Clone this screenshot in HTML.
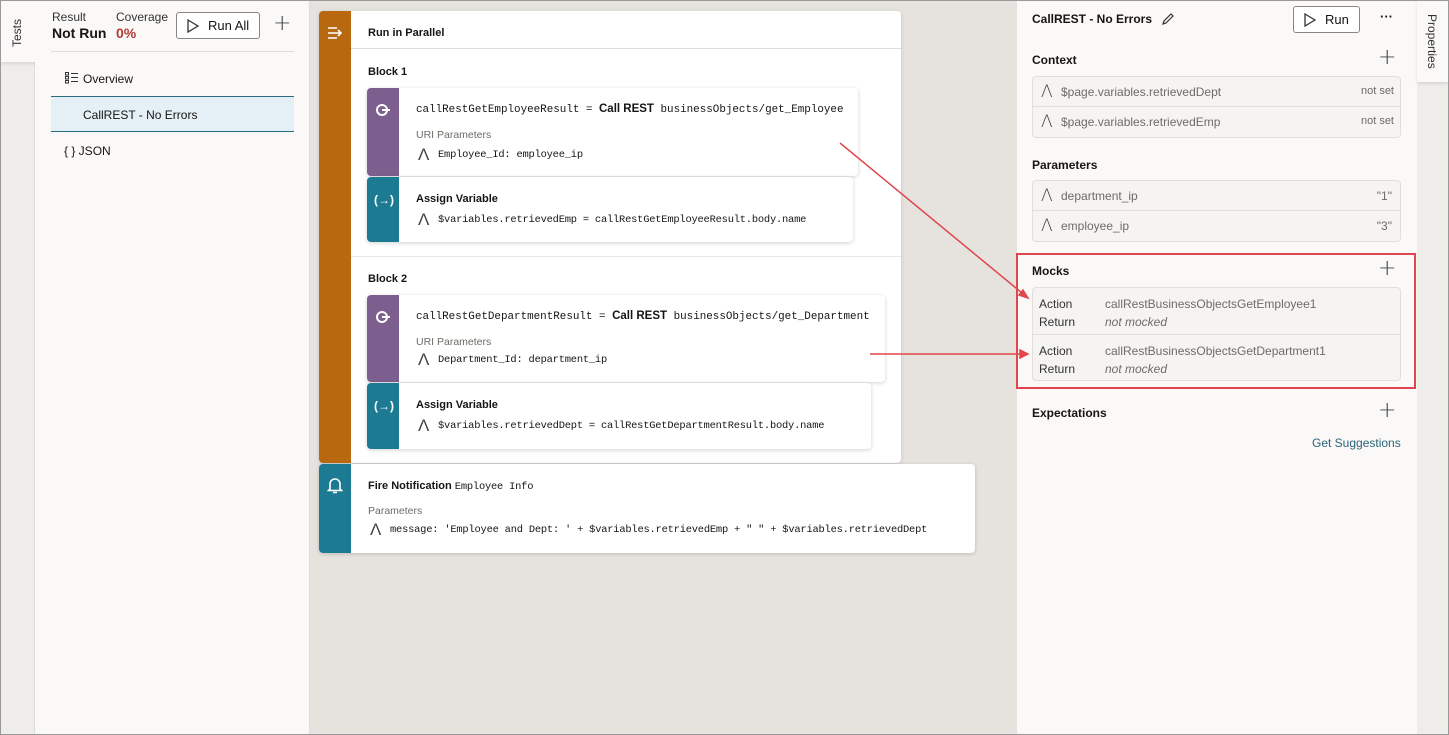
<!DOCTYPE html>
<html><head><meta charset="utf-8"><style>
*{box-sizing:border-box;margin:0;padding:0}
body{width:1449px;height:735px;overflow:hidden;font-family:"Liberation Sans",sans-serif;color:#161513;background:#e6e3df;position:relative;font-size:12px}
.a{position:absolute}
.mono{font-family:"Liberation Mono",monospace;font-size:10.4px;letter-spacing:-0.2px}
.mono2{font-family:"Liberation Mono",monospace;font-size:10.9px;letter-spacing:0}
.b{font-weight:bold}
.card{position:absolute;background:#fff;border-radius:4px;box-shadow:0 1px 4px rgba(0,0,0,.18)}
.strip{position:absolute;left:0;top:0;bottom:0;width:32px;border-radius:4px 0 0 4px}
.pur{background:#7c5f8e}
.teal{background:#1d7a93}
.sm{font-size:10.5px;color:#6f6b66}
.list{position:absolute;border:1px solid #e2dfdb;border-radius:4px;background:#f5f4f2}
.row{height:30px;border-bottom:1px solid #e2dfdb;position:relative;font-size:12px;color:#6f6b66}
.row:last-child{border-bottom:none}
.A{position:absolute;left:8px;top:5px;font-size:17px;color:#444;font-family:"DejaVu Sans",sans-serif;font-weight:200}
.plus{position:absolute;font-size:22px;color:#444;font-weight:200;font-family:"DejaVu Sans",sans-serif}
</style></head><body>
<div class="a" style="left:0;top:0;width:35px;height:735px;background:#efedea;border-right:1px solid #ddd"></div>
<div class="a" style="left:1px;top:1px;width:34px;height:61px;background:#faf9f8;box-shadow:0 2px 3px rgba(0,0,0,.1)"></div>
<div class="a" style="left:10px;top:47px;transform:rotate(-90deg);transform-origin:left top;font-size:12px;color:#333">Tests</div>
<div class="a" style="left:35px;top:0;width:275px;height:735px;background:#faf9f8;border-right:1px solid #ddd"></div>
<div class="a" style="left:52px;top:10px;font-size:12px;color:#333">Result</div>
<div class="a b" style="left:52px;top:25px;font-size:14px">Not Run</div>
<div class="a" style="left:116px;top:10px;font-size:12px;color:#333">Coverage</div>
<div class="a b" style="left:116px;top:25px;font-size:14px;color:#b23a35">0%</div>
<div class="a" style="left:176px;top:12px;width:84px;height:27px;border:1px solid #8a8580;border-radius:3px;background:#fff;font-size:13px;padding:5px 0 0 31px">Run All</div>
<svg class="a" style="left:187px;top:19px" width="12" height="14"><path d="M1 1L11 7L1 13Z" fill="none" stroke="#333" stroke-width="1.3"/></svg>
<div class="plus" style="left:273px;top:11px">+</div>
<div class="a" style="left:51px;top:51px;width:243px;height:1px;background:#ddd"></div>
<svg class="a" style="left:65px;top:72px" width="14" height="12"><g fill="none" stroke="#333" stroke-width="1"><rect x=".5" y=".5" width="3" height="2.5"/><rect x=".5" y="4.5" width="3" height="2.5"/><rect x=".5" y="8.5" width="3" height="2.5"/><path d="M6 1.5h7M6 5.5h7M6 9.5h7"/></g></svg>
<div class="a" style="left:83px;top:72px;font-size:12px">Overview</div>
<div class="a" style="left:51px;top:96px;width:243px;height:36px;background:#e4f0f5;border-top:1px solid #2c6a7e;border-bottom:1px solid #2c6a7e"></div>
<div class="a" style="left:83px;top:108px;font-size:12px">CallREST - No Errors</div>
<div class="a" style="left:64px;top:144px;font-size:12px">{ } JSON</div>
<div class="a" style="left:319px;top:11px;width:582px;height:452px;background:#fff;border-radius:4px;box-shadow:0 1px 4px rgba(0,0,0,.15)"></div>
<div class="a" style="left:319px;top:11px;width:32px;height:452px;background:#b8690f;border-radius:4px 0 0 4px"></div>
<svg class="a" style="left:326px;top:25px" width="18" height="16"><g stroke="#fff" stroke-width="1.6" fill="none"><path d="M2 3h9M2 8h13M2 13h9M12 5l3 3-3 3"/></g></svg>
<div class="a b" style="left:368px;top:27px;font-size:11px;font-weight:600">Run in Parallel</div>
<div class="a" style="left:351px;top:48px;width:550px;height:1px;background:#ddd"></div>
<div class="a b" style="left:368px;top:66px;font-size:11px">Block 1</div>
<div class="card" style="left:367px;top:88px;width:491px;height:88px"><div class="strip pur"></div></div>
<div class="a mono2" style="left:416px;top:103px">callRestGetEmployeeResult = <span style="font-family:'Liberation Sans';font-weight:bold;font-size:11.5px">Call REST</span> businessObjects/get_Employee</div>
<div class="a sm" style="left:416px;top:129px">URI Parameters</div>
<div class="a" style="left:418px;top:145px;font-size:17px;font-weight:200;color:#444">Λ</div>
<div class="a mono" style="left:438px;top:149px">Employee_Id: employee_ip</div>
<div class="card" style="left:367px;top:177px;width:486px;height:65px"><div class="strip teal"></div></div>
<div class="a b" style="left:374px;top:193px;font-size:12px;color:#fff">(→)</div>
<div class="a b" style="left:416px;top:193px;font-size:11px">Assign Variable</div>
<div class="a" style="left:418px;top:210px;font-size:17px;font-weight:200;color:#444">Λ</div>
<div class="a mono" style="left:438px;top:214px">$variables.retrievedEmp = callRestGetEmployeeResult.body.name</div>
<div class="a" style="left:351px;top:256px;width:550px;height:1px;background:#e8e8e8"></div>
<div class="a b" style="left:368px;top:273px;font-size:11px">Block 2</div>
<div class="card" style="left:367px;top:295px;width:518px;height:87px"><div class="strip pur"></div></div>
<div class="a mono2" style="left:416px;top:310px">callRestGetDepartmentResult = <span style="font-family:'Liberation Sans';font-weight:bold;font-size:11.5px">Call REST</span> businessObjects/get_Department</div>
<div class="a sm" style="left:416px;top:336px">URI Parameters</div>
<div class="a" style="left:418px;top:350px;font-size:17px;font-weight:200;color:#444">Λ</div>
<div class="a mono" style="left:438px;top:354px">Department_Id: department_ip</div>
<div class="card" style="left:367px;top:383px;width:504px;height:66px"><div class="strip teal"></div></div>
<div class="a b" style="left:374px;top:399px;font-size:12px;color:#fff">(→)</div>
<div class="a b" style="left:416px;top:399px;font-size:11px">Assign Variable</div>
<div class="a" style="left:418px;top:416px;font-size:17px;font-weight:200;color:#444">Λ</div>
<div class="a mono" style="left:438px;top:420px">$variables.retrievedDept = callRestGetDepartmentResult.body.name</div>
<svg class="a" style="left:374px;top:103px" width="18" height="14"><circle cx="8" cy="7" r="5" fill="none" stroke="#fff" stroke-width="2"/><path d="M8 7h8" stroke="#fff" stroke-width="2"/></svg>
<svg class="a" style="left:374px;top:310px" width="18" height="14"><circle cx="8" cy="7" r="5" fill="none" stroke="#fff" stroke-width="2"/><path d="M8 7h8" stroke="#fff" stroke-width="2"/></svg>
<div class="card" style="left:319px;top:464px;width:656px;height:89px"><div class="strip teal"></div></div>
<svg class="a" style="left:327px;top:477px" width="16" height="18"><path d="M3 12V7a5 5 0 0110 0v5l1.5 1.5h-13Z M6 15.5h4" fill="none" stroke="#fff" stroke-width="1.6"/></svg>
<div class="a" style="left:368px;top:480px;font-size:11px"><b>Fire Notification</b> <span class="mono">Employee Info</span></div>
<div class="a sm" style="left:368px;top:505px">Parameters</div>
<div class="a" style="left:370px;top:520px;font-size:17px;font-weight:200;color:#444">Λ</div>
<div class="a mono" style="left:390px;top:524px">message: 'Employee and Dept: ' + $variables.retrievedEmp + " " + $variables.retrievedDept</div>
<div class="a" style="left:1017px;top:0;width:400px;height:735px;background:#faf9f8"></div>
<div class="a" style="left:1417px;top:0;width:32px;height:735px;background:#efedea"></div>
<div class="a" style="left:1417px;top:0;width:31px;height:82px;background:#faf9f8;box-shadow:0 2px 3px rgba(0,0,0,.1)"></div>
<div class="a" style="left:1439px;top:14px;transform:rotate(90deg);transform-origin:left top;font-size:12px;color:#333">Properties</div>
<div class="a b" style="left:1032px;top:12px;font-size:12px">CallREST - No Errors</div>
<svg class="a" style="left:1161px;top:12px" width="14" height="14"><path d="M2 12l1-3 7-7 2 2-7 7z" fill="none" stroke="#333" stroke-width="1.2"/></svg>
<div class="a" style="left:1293px;top:6px;width:67px;height:27px;border:1px solid #8a8580;border-radius:3px;background:#fff;font-size:13px;padding:5px 0 0 31px">Run</div>
<svg class="a" style="left:1304px;top:13px" width="12" height="14"><path d="M1 1L11 7L1 13Z" fill="none" stroke="#333" stroke-width="1.3"/></svg>
<div class="a b" style="left:1380px;top:9px;font-size:13px">···</div>
<div class="a b" style="left:1032px;top:53px;font-size:12px">Context</div>
<div class="plus" style="left:1378px;top:45px">+</div>
<div class="list" style="left:1032px;top:76px;width:369px"><div class="row"><span class="A">Λ</span><span class="a" style="left:28px;top:8px">$page.variables.retrievedDept</span><span class="a" style="right:6px;top:8px;font-size:11px">not set</span></div><div class="row"><span class="A">Λ</span><span class="a" style="left:28px;top:8px">$page.variables.retrievedEmp</span><span class="a" style="right:6px;top:8px;font-size:11px">not set</span></div></div>
<div class="a b" style="left:1032px;top:158px;font-size:12px">Parameters</div>
<div class="list" style="left:1032px;top:180px;width:369px"><div class="row"><span class="A">Λ</span><span class="a" style="left:28px;top:8px">department_ip</span><span class="a" style="right:8px;top:8px">"1"</span></div><div class="row"><span class="A">Λ</span><span class="a" style="left:28px;top:8px">employee_ip</span><span class="a" style="right:8px;top:8px">"3"</span></div></div>
<div class="a" style="left:1016px;top:253px;width:400px;height:136px;border:2px solid #e0474c"></div>
<div class="a b" style="left:1032px;top:264px;font-size:12px">Mocks</div>
<div class="plus" style="left:1378px;top:256px">+</div>
<div class="list" style="left:1032px;top:287px;width:369px;height:94px"></div>
<div class="a" style="left:1033px;top:334px;width:367px;height:1px;background:#e2dfdb"></div>
<div class="a" style="left:1039px;top:295px;font-size:12px;color:#333;line-height:18px">Action<br>Return</div>
<div class="a" style="left:1105px;top:295px;font-size:12px;color:#6f6b66;line-height:18px">callRestBusinessObjectsGetEmployee1<br><i>not mocked</i></div>
<div class="a" style="left:1039px;top:342px;font-size:12px;color:#333;line-height:18px">Action<br>Return</div>
<div class="a" style="left:1105px;top:342px;font-size:12px;color:#6f6b66;line-height:18px">callRestBusinessObjectsGetDepartment1<br><i>not mocked</i></div>
<div class="a b" style="left:1032px;top:406px;font-size:12px">Expectations</div>
<div class="plus" style="left:1378px;top:398px">+</div>
<div class="a" style="left:1312px;top:436px;font-size:12px;color:#2a6478">Get Suggestions</div>
<svg class="a" style="left:0;top:0" width="1449" height="735"><g stroke="#e0474c" stroke-width="1.5" fill="#e0474c"><path d="M840 143L1022 293" fill="none"/><path d="M1028 298l-9-3 4-5z"/><path d="M870 354H1021" fill="none"/><path d="M1028 354l-8-4v8z"/></g></svg>
<div class="a" style="left:0;top:0;width:1449px;height:735px;border:1px solid #999"></div>
</body></html>
